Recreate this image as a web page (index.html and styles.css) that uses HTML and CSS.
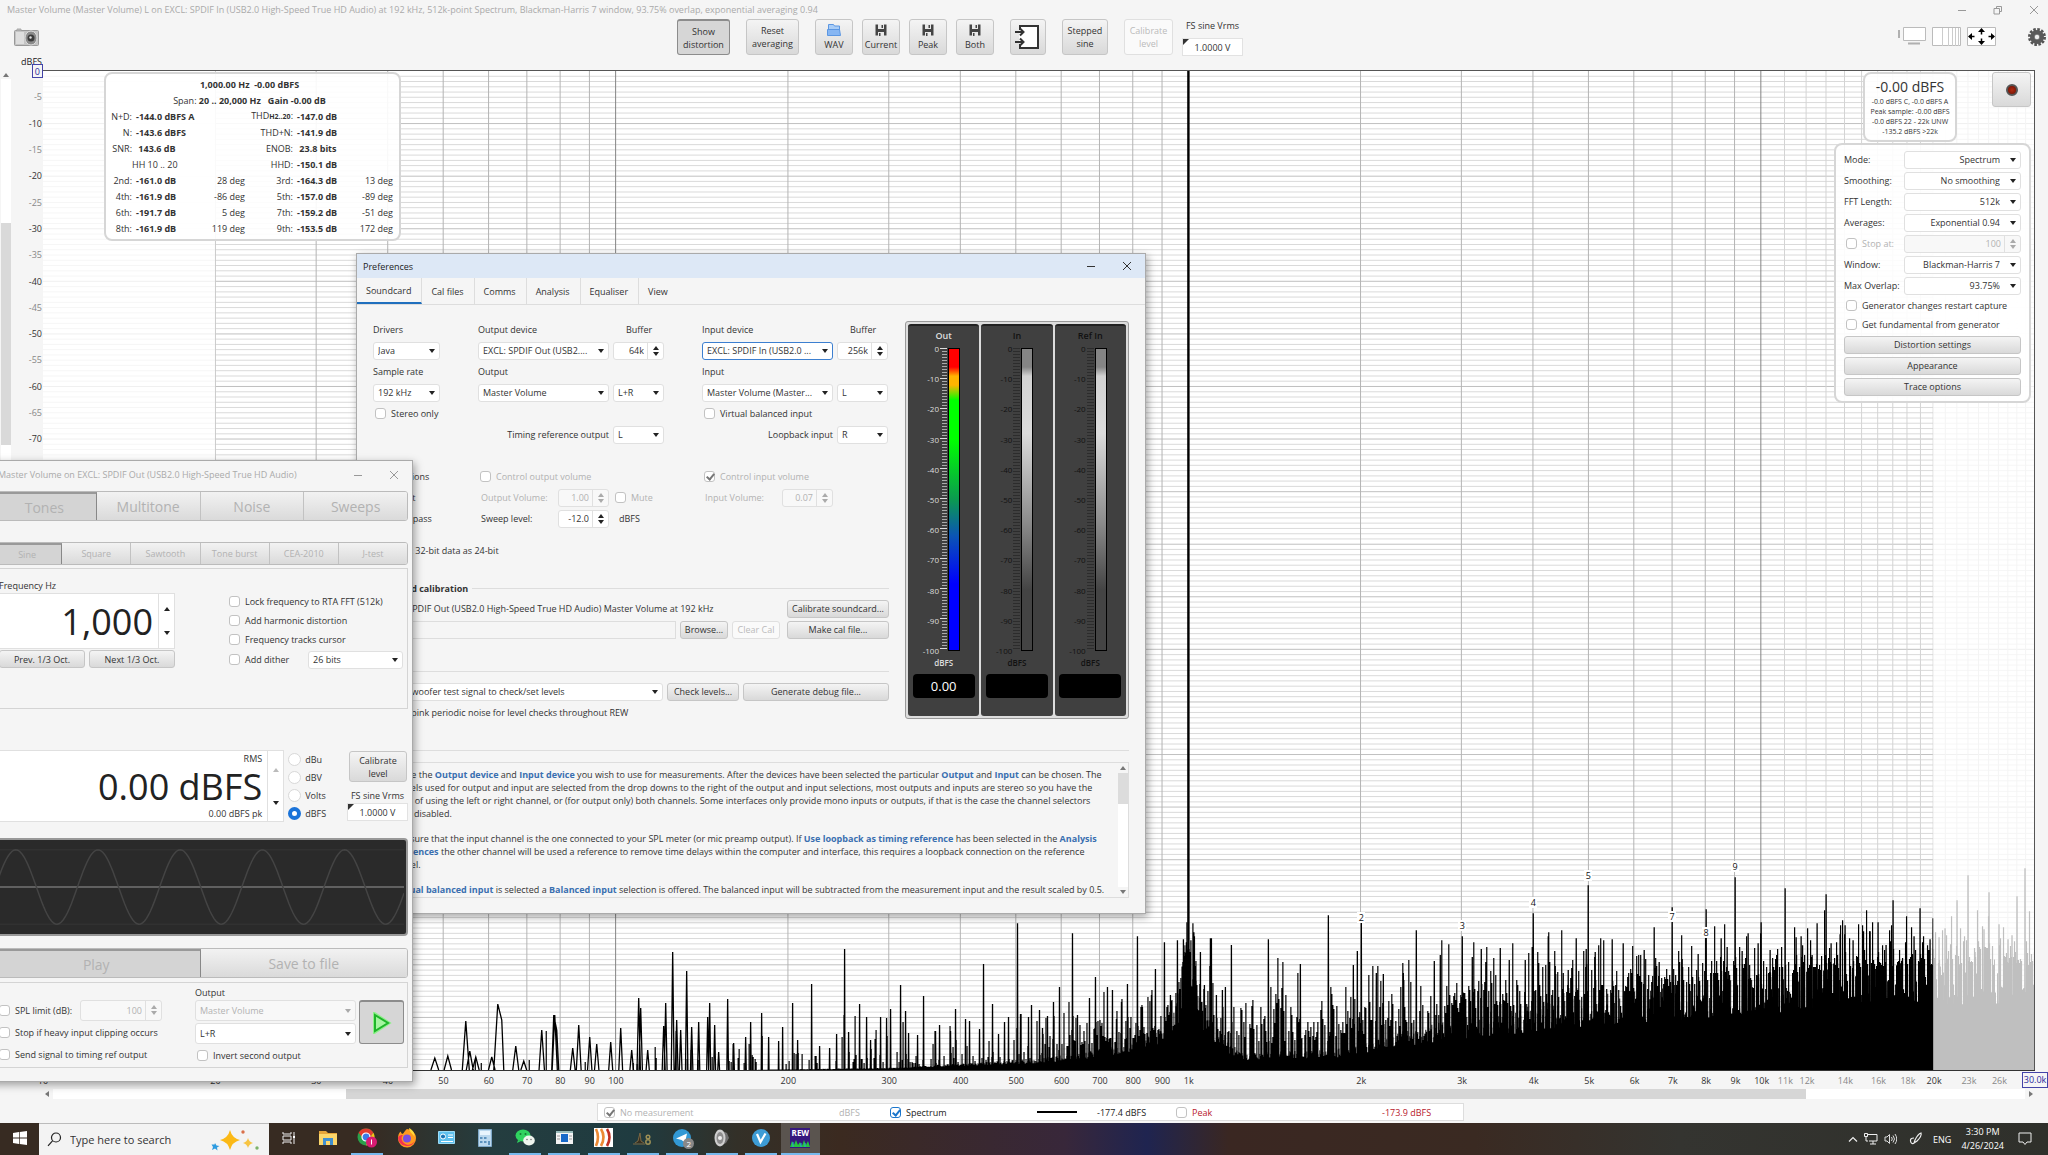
FILE: index.html
```html
<!DOCTYPE html>
<html lang="en">
<head>
<meta charset="utf-8">
<title>RTA</title>
<link rel="stylesheet" href="styles.css">
</head>
<body>
<div class="desktop">
<main class="rta">
  <header class="titlebar rta-title">
    <span class="title-text">Master Volume (Master Volume) L on EXCL: SPDIF In (USB2.0 High-Speed True HD Audio) at 192 kHz, 512k-point Spectrum, Blackman-Harris 7 window, 93.75% overlap, exponential averaging 0.94</span>
    <svg class="win-icon" viewBox="0 0 10 10"><path d="M1 5.5h8"/></svg>
    <svg class="win-icon" viewBox="0 0 10 10"><path d="M1 3.500h5.500v5.500h-5.500zM3.500 3.500v-2h5v5h-2"/></svg>
    <svg class="win-icon" viewBox="0 0 10 10"><path d="M1 1l8 8M9 1l-8 8"/></svg>
  </header>

  <div class="toolbar">
    <div class="tool-side">
      <button class="bare" aria-label="Capture image">
        <svg width="26" height="18" viewBox="0 0 26 18"><rect x=".5" y="2.500" width="24" height="15" rx="1" fill="#c4c4c4" stroke="#999"/><rect x="2" y="4" width="8" height="12" fill="#dedede"/><path d="M3 2.500v-1.500h4v1.500" fill="#bbb" stroke="#aaa"/><ellipse cx="17" cy="10" rx="6" ry="7" fill="#8b8b8b" stroke="#ddd"/><circle cx="17" cy="10" r="3.500" fill="#3c3c3c"/><circle cx="16.500" cy="9.500" r="1.200" fill="#ddd"/></svg>
      </button>
    </div>
    <div class="tool-main">
      <button class="btn tool wide pressed">Show<br>distortion</button>
      <button class="btn tool wide">Reset<br>averaging</button>
      <div class="tool-group">
        <button class="btn tool sq"><svg width="14" height="12" viewBox="0 0 14 12"><path d="M1.500 .5h5l1 1.500h5v4h-11z" fill="#a9cdf7" stroke="#5c97e2"/><path d="M.5 5.500h12l1 6h-13z" fill="#86b6f3" stroke="#5c97e2"/></svg>WAV</button>
        <button class="btn tool sq"><svg width="12" height="12" viewBox="0 0 12 12"><path d="M.5 .5h11v11h-11z" fill="#444"/><path d="M3 0h6v5h-6zM3 8h6v4h-6z" fill="#e9e9e9"/><path d="M6.500 1h1.500v3h-1.500zM4 9h1.500v3h-1.500z" fill="#444"/></svg>Current</button>
        <button class="btn tool sq"><svg width="12" height="12" viewBox="0 0 12 12"><path d="M.5 .5h11v11h-11z" fill="#444"/><path d="M3 0h6v5h-6zM3 8h6v4h-6z" fill="#e9e9e9"/><path d="M6.500 1h1.500v3h-1.500zM4 9h1.500v3h-1.500z" fill="#444"/></svg>Peak</button>
        <button class="btn tool sq"><svg width="12" height="12" viewBox="0 0 12 12"><path d="M.5 .5h11v11h-11z" fill="#444"/><path d="M3 0h6v5h-6zM3 8h6v4h-6z" fill="#e9e9e9"/><path d="M6.500 1h1.500v3h-1.500zM4 9h1.500v3h-1.500z" fill="#444"/></svg>Both</button>
      </div>
      <button class="btn tool io" aria-label="Inputs"><svg width="26" height="26" viewBox="0 0 26 26"><path d="M5 6v-4h18v22h-18v-4" fill="#fff" stroke="#333" stroke-width="2"/><path d="M5 7v12" stroke="#fff" stroke-width="2"/><path d="M0 8h8M5 4.500l3.500 3.500-3.500 3.500M0 18h8M5 14.500l3.500 3.500-3.500 3.500" fill="none" stroke="#333" stroke-width="2"/></svg></button>
      <button class="btn tool mid">Stepped<br>sine</button>
      <div class="tool-group">
        <button class="btn tool cal" disabled>Calibrate<br>level</button>
        <label class="fs">FS sine Vrms<span class="flag"><input value="1.0000 V"></span></label>
      </div>
    </div>
    <div class="tool-right">
      <button class="bare" aria-label="Scrollbars"><svg width="28" height="20" viewBox="0 0 28 20"><path d="M5.500 .5h22v13h-22z" fill="#fff" stroke="#bbb"/><path d="M1 3v8M10 16.500h12" stroke="#b0b0b0" stroke-width="2"/></svg></button>
      <button class="bare" aria-label="Frequency axis"><svg width="29" height="20" viewBox="0 0 29 20"><path d="M.5 .5h28v18h-28z" fill="#fff" stroke="#bbb"/><path d="M10.500 1v18M16.500 1v18M20.500 1v18M23.500 1v18M26.500 1v18" stroke="#ccc"/></svg></button>
      <button class="bare" aria-label="Graph limits"><svg width="29" height="20" viewBox="0 0 29 20"><path d="M.5 .5h28v18h-28z" fill="#fff" stroke="#bbb"/><path d="M2.500 9.500h5M21.500 9.500h5M14.500 2.500v5M14.500 11.500v5" stroke="#000" stroke-width="1.500"/><path d="M1 9.500l4-3.500v7zM28 9.500l-4-3.500v7zM14.500 1l-3.500 4h7zM14.500 18l-3.500-4h7z"/></svg></button>
      <button class="bare gear" aria-label="Settings"><svg width="18" height="18" viewBox="0 0 18 18"><circle cx="9" cy="9" r="7.500" fill="none" stroke="#555" stroke-width="3" stroke-dasharray="2.500 1.430"/><circle cx="9" cy="9" r="5" fill="#777" stroke="#5a5a5a" stroke-width="4"/><circle cx="9" cy="9" r="2.200" fill="#eee"/></svg></button>
    </div>
  </div>

  <div class="chart-row">
    <div class="vbar"><i class="up"></i><div class="vtrack"><div class="vthumb"></div></div></div>
    <div class="yaxis"><span class="yunit">dBFS</span><div id="ylabels"></div></div>
    <div class="plot">
      <svg id="graph" viewBox="0 0 1992 1000" preserveAspectRatio="none"></svg>
      <div id="marks"></div>
      <section class="card stats">
        <table>
          <colgroup><col class="c1"><col class="c2"><col class="c3"><col class="c4"><col class="c5"><col class="c6"></colgroup>
          <tr><td colspan="6" class="mid"><b>1,000.00 Hz&nbsp; -0.00 dBFS</b></td></tr>
          <tr><td colspan="6" class="mid">Span: <b>20 .. 20,000 Hz&nbsp;&nbsp; Gain -0.00 dB</b></td></tr>
          <tr><th>N+D:</th><td class="v">-144.0 dBFS A</td><td></td><th>THD<small>H2..20</small>:</th><td class="v">-147.0 dB</td><td></td></tr>
          <tr><th>N:</th><td class="v">-143.6 dBFS</td><td></td><th>THD+N:</th><td class="v">-141.9 dB</td><td></td></tr>
          <tr><th>SNR:</th><td class="v">&nbsp;143.6 dB</td><td></td><th>ENOB:</th><td class="v">&nbsp;23.8 bits</td><td></td></tr>
          <tr><th></th><td>HH 10 .. 20</td><td></td><th>HHD:</th><td class="v">-150.1 dB</td><td></td></tr>
          <tr><th>2nd:</th><td class="v">-161.0 dB</td><td class="d">28 deg</td><th>3rd:</th><td class="v">-164.3 dB</td><td class="d">13 deg</td></tr>
          <tr><th>4th:</th><td class="v">-161.9 dB</td><td class="d">-86 deg</td><th>5th:</th><td class="v">-157.0 dB</td><td class="d">-89 deg</td></tr>
          <tr><th>6th:</th><td class="v">-191.7 dB</td><td class="d">5 deg</td><th>7th:</th><td class="v">-159.2 dB</td><td class="d">-51 deg</td></tr>
          <tr><th>8th:</th><td class="v">-161.9 dB</td><td class="d">119 deg</td><th>9th:</th><td class="v">-153.5 dB</td><td class="d">172 deg</td></tr>
        </table>
      </section>
      <aside class="side">
        <div class="side-top">
          <div class="card level"><strong>-0.00 dBFS</strong><span>-0.0 dBFS C, -0.0 dBFS A</span><span>Peak sample: -0.00 dBFS</span><span>-0.0 dBFS 22 - 22k UNW</span><span>-135.2 dBFS &gt;22k</span></div>
          <button class="btn rec" aria-label="Record"><span class="led"></span></button>
        </div>
        <form class="card settings">
          <div class="row"><label for="s1">Mode:</label><span class="combo r"><select id="s1"><option>Spectrum</option></select></span></div>
          <div class="row"><label for="s2">Smoothing:</label><span class="combo r"><select id="s2"><option>No smoothing</option></select></span></div>
          <div class="row"><label for="s3">FFT Length:</label><span class="combo r"><select id="s3"><option>512k</option></select></span></div>
          <div class="row"><label for="s4">Averages:</label><span class="combo r"><select id="s4"><option>Exponential 0.94</option></select></span></div>
          <div class="row off"><label class="ck"><input type="checkbox" disabled>Stop at:</label><span class="spin"><input value="100" aria-label="Stop at" disabled><i class="arr"></i></span></div>
          <div class="row"><label for="s5">Window:</label><span class="combo r"><select id="s5"><option>Blackman-Harris 7</option></select></span></div>
          <div class="row"><label for="s6">Max Overlap:</label><span class="combo r"><select id="s6"><option>93.75%</option></select></span></div>
          <label class="ck short"><input type="checkbox">Generator changes restart capture</label>
          <label class="ck short"><input type="checkbox">Get fundamental from generator</label>
          <div class="row"><button type="button" class="btn full">Distortion settings</button></div>
          <div class="row"><button type="button" class="btn full">Appearance</button></div>
          <div class="row"><button type="button" class="btn full">Trace options</button></div>
        </form>
      </aside>
    </div>
  </div>
  <div class="xaxis" id="xlabels"></div>
  <div class="hbar"><i class="left"></i><div class="htrack"><div class="hthumb"></div></div><i class="right"></i></div>
  <div class="legend">
    <label class="ck off l1"><input type="checkbox" checked disabled>No measurement</label><span class="off l2">dBFS</span>
    <label class="ck blue l3"><input type="checkbox" checked>Spectrum</label><i class="trace"></i><span class="l4">-177.4 dBFS</span>
    <label class="ck red l5"><input type="checkbox">Peak</label><span class="red">-173.9 dBFS</span>
  </div>
</main>

<section class="window prefs">
  <header class="titlebar">
    <span class="title-text">Preferences</span>
    <svg class="win-icon" viewBox="0 0 10 10"><path d="M1 5.500h8"/></svg>
    <svg class="win-icon" viewBox="0 0 10 10"><path d="M1 1l8 8M9 1l-8 8"/></svg>
  </header>
  <nav class="tabs"><button class="on">Soundcard</button><button>Cal files</button><button>Comms</button><button>Analysis</button><button>Equaliser</button><button>View</button></nav>
  <div class="prefs-body">
    <div class="prefs-cols">
      <form class="card-form">
        <div class="pgrid">
          <label for="p1">Drivers</label><label for="p2" class="g2">Output device</label><label for="p3" class="g3 buf">Buffer</label><label for="p4" class="g5">Input device</label><label for="p5" class="g6 buf">Buffer</label>
          <span class="combo drv"><select id="p1"><option>Java</option></select></span><span class="combo g2"><select id="p2"><option>EXCL: SPDIF Out (USB2....</option></select></span><span class="spin g3"><input id="p3" value="64k"><i class="arr"></i></span><span class="combo focus g5"><select id="p4"><option>EXCL: SPDIF In (USB2.0 ...</option></select></span><span class="spin g6"><input id="p5" value="256k"><i class="arr"></i></span>
          <label for="p6">Sample rate</label><label for="p7" class="g2">Output</label><label for="p8" class="g5">Input</label>
          <span class="combo drv"><select id="p6"><option>192 kHz</option></select></span><span class="combo g2"><select id="p7"><option>Master Volume</option></select></span><span class="combo g3"><select aria-label="Output channel"><option>L+R</option></select></span><span class="combo g5"><select id="p8"><option>Master Volume (Master...</option></select></span><span class="combo g6"><select aria-label="Input channel"><option>L</option></select></span>
          <label class="ck g1"><input type="checkbox">Stereo only</label><label class="ck g5"><input type="checkbox">Virtual balanced input</label>
          <label for="p9" class="g2 end">Timing reference output</label><span class="combo g3"><select id="p9"><option>L</option></select></span><label for="p10" class="g5 end">Loopback input</label><span class="combo g6"><select id="p10"><option>R</option></select></span>
          <span class="blank g1"></span>
          <span class="g1">Input options</span><label class="ck off g2"><input type="checkbox" disabled>Control output volume</label><label class="ck off g5"><input type="checkbox" checked disabled>Control input volume</label>
          <label class="ck g1"><input type="checkbox">Invert</label><span class="pair off g2"><label for="p11">Output Volume:</label><span class="spin"><input id="p11" value="1.00" disabled><i class="arr"></i></span></span><label class="ck off g3"><input type="checkbox" disabled>Mute</label><span class="pair off g5"><label for="p12">Input Volume:</label><span class="spin"><input id="p12" value="0.07" disabled><i class="arr"></i></span></span>
          <label class="ck g1"><input type="checkbox">High pass</label><span class="pair g2"><label for="p13">Sweep level:</label><span class="spin"><input id="p13" value="-12.0"><i class="arr"></i></span></span><span class="unit g3">dBFS</span>
        </div>
        <label class="ck treat"><input type="checkbox">Treat 32-bit data as 24-bit</label>
        <h2><span>Soundcard calibration</span></h2>
        <div class="prow"><span class="grow dev">EXCL: SPDIF Out (USB2.0 High-Speed True HD Audio) Master Volume at 192 kHz</span><button type="button" class="btn b102">Calibrate soundcard...</button></div>
        <div class="prow"><input class="path grow" aria-label="Calibration file"><button type="button" class="btn b48">Browse...</button><button type="button" class="btn b48" disabled>Clear Cal</button><button type="button" class="btn b102 more">Make cal file...</button></div>
        <hr>
        <div class="prow"><span class="combo grow"><select aria-label="Test signal"><option>Use subwoofer test signal to check/set levels</option></select></span><button type="button" class="btn b72">Check levels...</button><button type="button" class="btn b146">Generate debug file...</button></div>
        <label class="ck pink"><input type="checkbox">Use pink periodic noise for level checks throughout REW</label>
      </form>
      <div class="meters" id="meters"></div>
    </div>
    <div class="help">
      <div class="help-text">
        <p>Choose the <b>Output device</b> and <b>Input device</b> you wish to use for measurements. After the devices have been selected the particular <b>Output</b> and <b>Input</b> can be chosen. The<br>channels used for output and input are selected from the drop downs to the right of the output and input selections, most outputs and inputs are stereo so you have the<br>option of using the left or right channel, or (for output only) both channels. Some interfaces only provide mono inputs or outputs, if that is the case the channel selectors<br>will be disabled.</p>
        <p>Make sure that the input channel is the one connected to your SPL meter (or mic preamp output). If <b>Use loopback as timing reference</b> has been selected in the <b>Analysis</b><br><b>Preferences</b> the other channel will be used a reference to remove time delays within the computer and interface, this requires a loopback connection on the reference<br>channel.</p>
        <p>If <b>Virtual balanced input</b> is selected a <b>Balanced input</b> selection is offered. The balanced input will be subtracted from the measurement input and the result scaled by 0.5.</p>
      </div>
      <div class="help-bar"><i class="up"></i><div class="hb-track"><div class="hb-thumb"></div></div><i class="down"></i></div>
    </div>
  </div>
</section>

<section class="window gen">
  <header class="titlebar">
    <span class="title-text">Master Volume on EXCL: SPDIF Out (USB2.0 High-Speed True HD Audio)</span>
    <svg class="win-icon" viewBox="0 0 10 10"><path d="M1 5.500h8"/></svg>
    <svg class="win-icon" viewBox="0 0 10 10"><path d="M1 1l8 8M9 1l-8 8"/></svg>
  </header>
  <div class="gen-body">
    <div class="seg big four"><button class="on">Tones</button><button>Multitone</button><button>Noise</button><button>Sweeps</button></div>
    <div class="seg small"><button class="on">Sine</button><button>Square</button><button>Sawtooth</button><button>Tone burst</button><button>CEA-2010</button><button>J-test</button></div>
    <div class="panel tone">
      <div class="freq">
        <label for="g1">Frequency Hz</label>
        <span class="bigspin"><input id="g1" value="1,000"><i class="updn"></i></span>
        <div class="oct"><button class="btn">Prev. 1/3 Oct.</button><button class="btn">Next 1/3 Oct.</button></div>
      </div>
      <div class="opts">
        <label class="ck"><input type="checkbox">Lock frequency to RTA FFT (512k)</label>
        <label class="ck"><input type="checkbox">Add harmonic distortion</label>
        <label class="ck"><input type="checkbox">Frequency tracks cursor</label>
        <div class="dither"><label class="ck"><input type="checkbox">Add dither</label><span class="combo"><select aria-label="Dither bits"><option>26 bits</option></select></span></div>
      </div>
    </div>
    <div class="levels">
      <div class="bigspin lvl"><div class="lvl-text"><label for="g2">RMS</label><input id="g2" value="0.00 dBFS"><span>0.00 dBFS pk</span></div><i class="updn half"></i></div>
      <div class="radios">
        <label><input type="radio" name="u">dBu</label><label><input type="radio" name="u">dBV</label><label><input type="radio" name="u">Volts</label><label><input type="radio" name="u" checked>dBFS</label>
      </div>
      <div class="calib"><button class="btn">Calibrate<br>level</button><label class="fs">FS sine Vrms<span class="flag"><input value="1.0000 V"></span></label></div>
    </div>
    <div class="scope"><svg id="wave" viewBox="0 0 412 92" preserveAspectRatio="none"></svg></div>
    <div class="seg big two"><button class="on">Play</button><button>Save to file</button></div>
    <div class="panel outp">
      <div class="out-left">
        <div class="spl"><label class="ck"><input type="checkbox">SPL limit (dB):</label><span class="spin off"><input value="100" aria-label="SPL limit" disabled><i class="arr"></i></span></div>
        <label class="ck"><input type="checkbox">Stop if heavy input clipping occurs</label>
        <label class="ck"><input type="checkbox">Send signal to timing ref output</label>
      </div>
      <div class="out-mid">
        <label for="g3">Output</label>
        <span class="combo off"><select id="g3" disabled><option>Master Volume</option></select></span>
        <span class="combo"><select aria-label="Output channels"><option>L+R</option></select></span>
        <label class="ck"><input type="checkbox">Invert second output</label>
      </div>
      <button class="btn play pressed" aria-label="Play"><svg width="20" height="22" viewBox="0 0 20 22"><path d="M3 2.500l13 8.500-13 8.500z" fill="#b9ffb0" stroke="#8df08a" stroke-width="4"/><path d="M3 3l13 8-13 8z" fill="#a5f5a0" stroke="#1fb52a" stroke-width="2"/></svg></button>
    </div>
  </div>
</section>

<footer class="taskbar">
  <button class="tb start" aria-label="Start"><svg width="14" height="14" viewBox="0 0 14 14"><path d="M0 2l6-1v5.600h-6zM6.700 .9l7.300-.9v6.600h-7.300zM0 7.400h6v5.600l-6-1zM6.700 7.400h7.300v6.600l-7.300-.9z" fill="#fff"/></svg></button>
  <label class="search"><svg width="15" height="15" viewBox="0 0 15 15"><circle cx="9" cy="5.500" r="4.500" fill="none" stroke="#222" stroke-width="1.200"/><path d="M5.500 8.800l-4.500 5" stroke="#222" stroke-width="1.200"/></svg><input placeholder="Type here to search">
    <svg width="50" height="22" viewBox="0 0 50 22"><path d="M19 1q2 8 10 10q-8 2-10 10q-2-8-10-10q8-2 10-10z" fill="#fbb916"/><path d="M37 9q1 4 5 5q-4 1-5 5q-1-4-5-5q4-1 5-5z" fill="#f7c443"/><path d="M4 14l1.500 2.500 3 .5-2.500 1.500.5 3-2.500-2-3 1.500 1-3-1.500-2.500h3z" fill="#2d9be0"/><circle cx="32" cy="3" r="1.700" fill="#d9704a"/><circle cx="46" cy="19" r="1.700" fill="#7cb36a"/></svg></label>
  <nav class="apps">
    <button class="tb" aria-label="Task view"><svg width="14" height="14" viewBox="0 0 14 14"><path d="M1 1v2h8v-2M1 13v-2h8v2M1 5h8v4h-8zM12 1v12" fill="none" stroke="#eee"/><path d="M11 5h2v2h-2z" fill="#fff"/></svg></button>
    <button class="tb" aria-label="Explorer"><svg width="18" height="16" viewBox="0 0 18 16"><path d="M0 1h7l2 2h9v12h-18z" fill="#e5a53a"/><path d="M0 4h18v11h-18z" fill="#fbd66b"/><path d="M4 8h10v7h-3v-4h-4v4h-3z" fill="#3f8fd0"/></svg></button>
    <button class="tb run" aria-label="Chrome"><svg width="20" height="20" viewBox="0 0 20 20"><circle cx="9" cy="9" r="8.500" fill="#2aa04a"/><path d="M1.600 4.800a8.500 8.500 0 0 1 14.800 0l-3.400 4.200-8 0z" fill="#e33b2e"/><path d="M16.400 4.800a8.500 8.500 0 0 1-7.400 12.700l4-8z" fill="#fbc116"/><circle cx="9" cy="9" r="4" fill="#3a7be8" stroke="#fff" stroke-width="1.200"/><circle cx="14.500" cy="14" r="5.500" fill="#d81b73"/><path d="M14.500 11.500v5" stroke="#fff"/></svg></button>
    <button class="tb" aria-label="Firefox"><svg width="20" height="20" viewBox="0 0 20 20"><path d="M10 1c6 1 9 5 9 9a9 9 0 0 1-18 1c0-4 1-6 2.500-7.500l1.500 2.500c2 0 2-3 5-5z" fill="#ff9a1f"/><path d="M1 10a9 9 0 0 0 17 3c-3 4-8 5-11 2s-3-6-1-8c-2 0-4 0-5 3z" fill="#f5324e"/><circle cx="10" cy="10.500" r="4" fill="#7b4ee0"/><path d="M12 0c4 2 6 5 5.500 9-1-3-5-4-5.500-9z" fill="#ffd93a"/></svg></button>
    <button class="tb" aria-label="Control panel"><svg width="17" height="13" viewBox="0 0 17 13"><path d="M.5 .5h16v12h-16z" fill="#5fc0ee" stroke="#9cdcf7"/><circle cx="5" cy="5.500" r="2.500" fill="#1873b5" stroke="#fff"/><path d="M10 4h5M10 6.500h5M3 10.500h12" stroke="#fff"/></svg></button>
    <button class="tb" aria-label="Calculator"><svg width="14" height="18" viewBox="0 0 14 18"><path d="M.5 .5h13v17h-13z" fill="#bcd9ee" stroke="#7fa9c9"/><path d="M2 2h10v4h-10z" fill="#e9f5fd"/><path d="M2 8h2.500v2h-2.500zM6 8h2.500v2h-2.500zM2 12h2.500v2h-2.500zM6 12h2.500v2h-2.500zM10 12h2v4h-2z" fill="#5d93bd"/></svg></button>
    <button class="tb run" aria-label="WeChat"><svg width="20" height="18" viewBox="0 0 20 18"><ellipse cx="8" cy="6.500" rx="7.500" ry="6" fill="#2fd35f"/><path d="M3 11l-1 3 4-2z" fill="#2fd35f"/><ellipse cx="14" cy="11.500" rx="5.800" ry="5" fill="#eef5ee"/><g fill="#157a34"><circle cx="5.500" cy="5" r="1"/><circle cx="10.500" cy="5" r="1"/></g><g fill="#777"><circle cx="12" cy="10.500" r=".8"/><circle cx="16" cy="10.500" r=".8"/></g></svg></button>
    <button class="tb run" aria-label="Viewer"><svg width="17" height="13" viewBox="0 0 17 13"><path d="M0 0h17v13h-17z" fill="#f4f4f4"/><path d="M5 3h7v8h-7z" fill="#1769c8"/><path d="M0 1h17" stroke="#9bb" stroke-width="2"/><path d="M1 5h3M1 8h3M13 5h3M13 8h3" stroke="#999"/></svg></button>
    <button class="tb run" aria-label="Audio tool"><svg width="19" height="19" viewBox="0 0 19 19"><path d="M0 0h19v19h-19z" fill="#fff"/><path d="M2 1q4 8 0 17M7 1q5 8 0 17" fill="none" stroke="#ec8a34" stroke-width="2.600"/><path d="M13 1q5 8 0 17" fill="none" stroke="#c23022" stroke-width="2.600"/></svg></button>
    <button class="tb run" aria-label="Amp tool"><svg width="19" height="16" viewBox="0 0 19 16"><path d="M0 14h12M2 13l3-2 2-8 1 8 3 2" fill="#3a3020" stroke="#7d6843"/><circle cx="15" cy="7" r="1.800" fill="none" stroke="#9c8f56" stroke-width="1.500"/><circle cx="15" cy="12" r="2.200" fill="none" stroke="#9c8f56" stroke-width="1.500"/></svg></button>
    <button class="tb run" aria-label="Messenger"><span class="badge-wrap"><svg width="18" height="18" viewBox="0 0 18 18"><circle cx="9" cy="9" r="9" fill="#3299d5"/><path d="M3 9.500l11-5-2 9-3.500-2.500z" fill="#fff"/></svg><b class="badge">2</b></span></button>
    <button class="tb run" aria-label="Speaker"><svg width="16" height="18" viewBox="0 0 16 18"><path d="M6 1l7 3 2 5-3 5-6 3z" fill="#6f6f6f"/><ellipse cx="6" cy="9" rx="5.500" ry="8.500" fill="#cfcfcf"/><ellipse cx="6" cy="9" rx="3.500" ry="6" fill="#8d8d8d"/><circle cx="6" cy="9" r="2" fill="#eee"/></svg></button>
    <button class="tb run" aria-label="V app"><svg width="18" height="18" viewBox="0 0 18 18"><circle cx="9" cy="9" r="9" fill="#3d9cd6"/><path d="M5 5l3.500 8 5-8.500" fill="none" stroke="#fff" stroke-width="2.200"/></svg></button>
    <button class="tb run active" aria-label="REW"><span class="rew"><b>REW</b><svg width="20" height="9" viewBox="0 0 20 9"><path d="M0 9l2-6 2 4 2-5 2 5 2-3 2 4 2-6 2 5 2-4 2 6z" fill="#26c53c"/><path d="M3 9v-5M11 9v-4M15 9v-4" stroke="#27a8d8"/></svg></span></button>
  </nav>
  <div class="tray">
    <svg width="10" height="8" viewBox="0 0 10 8"><path d="M1 6.500l4-4 4 4" fill="none" stroke="#eee" stroke-width="1.200"/></svg>
    <svg width="14" height="12" viewBox="0 0 14 12"><path d="M4 1.500h9v6.500h-8M9 8v3M6 11h6M.5 .5h3v3h-3zM2 4v4h2" fill="none" stroke="#eee"/></svg>
    <svg width="13" height="12" viewBox="0 0 13 12"><path d="M1 4h2l2.500-2.500v9l-2.500-2.500h-2zM7.500 4q1.500 2 0 4M9 2.500q3 3.500 0 7M11 1q3.500 5 0 10" fill="none" stroke="#ddd"/></svg>
    <svg class="pen" width="14" height="14" viewBox="0 0 14 14"><path d="M12 1q-3 1-6 7l-1 3 3-2q5-5 4-8zM5 6q-4 0-3.500 3t3 2.500" fill="none" stroke="#eee" stroke-width="1.200"/></svg>
    <span>ENG</span>
    <time>3:30 PM<br>4/26/2024</time>
    <svg width="14" height="14" viewBox="0 0 14 14"><path d="M1 1h12v9h-4l-2 2.500-2-2.500h-4z" fill="none" stroke="#eee"/></svg>
  </div>
</footer>
</div>
<script src="app.js"></script>
</body>
</html>
```
FILE: styles.css
```css
* { box-sizing: border-box; }
body, button, input, select { font-family: "Open Sans", "Noto Sans", sans-serif; font-size: 9px; color: #333; }
body { margin: 0; line-height: 13px; background: #f5f5f5; }
button, input, select { margin: 0; }
p, h2 { margin: 0; }
svg { display: block; flex: none; }

.desktop { position: relative; height: 100vh; overflow: hidden; display: flex; flex-direction: column; }
.rta { flex: 1; min-height: 0; display: flex; flex-direction: column; background: #f5f5f5; }

.titlebar { display: flex; align-items: center; gap: 26px; height: 24px; padding: 0 13px 0 7px; flex: none; }
.title-text { flex: 1; white-space: nowrap; }
.win-icon { width: 10px; height: 10px; fill: none; stroke: #333; stroke-width: 1; }
.rta-title { height: 19px; padding: 0 9px 0 7px; color: #aaa; }
.rta-title .win-icon { stroke: #999; }

/* buttons */
.btn { height: 18px; padding: 0; border: 1px solid #c6c6c6; border-radius: 3px; background: linear-gradient(#f4f4f4, #d9d9d9); line-height: 13px; white-space: nowrap; }
.btn.pressed { background: #d6d6d6; border: 1px solid #8c8c8c; border-top-width: 2px; }
.btn:disabled { background: #fafafa; border-color: #e0e0e0; color: #bbb; }
.bare { padding: 0; border: 0; background: none; }

/* toolbar */
.toolbar { display: flex; align-items: flex-start; height: 51px; flex: none; }
.tool-side { width: 677px; padding: 9px 0 0 14px; }
.tool-main { display: flex; gap: 16px; }
.tool-group { display: flex; gap: 9px; }
.btn.tool { height: 36px; display: flex; flex-direction: column; align-items: center; justify-content: center; }
.tool.wide { width: 53px; }
.tool.sq { width: 38px; gap: 2px; }
.tool.io { width: 36px; }
.tool.mid { width: 46px; }
.tool.cal { width: 49px; }
.tool-right { display: flex; gap: 6px; margin-left: auto; padding: 8px 2px 0 0; }
.gear { margin-left: 26px; }
.fs { display: block; width: 61px; text-align: center; }
.flag { display: block; margin-top: 6px; position: relative; }
.flag input { width: 100%; height: 18px; border: 1px solid #e2e2e2; background: #fff; text-align: center; padding: 0; display: block; }
.flag::before { content: ""; position: absolute; left: 1px; top: 1px; border: 3px solid transparent; border-top-color: #333; border-left-color: #333; }

/* check boxes, combos and spinners */
.ck { display: flex; align-items: center; gap: 5px; white-space: nowrap; padding-left: 2px; }
.ck input { appearance: none; flex: none; width: 11px; height: 11px; border: 1px solid #c2c2c2; border-radius: 3px; background: #fff; position: relative; }
.ck input:checked::after { content: ""; position: absolute; left: 3px; top: 0; width: 3px; height: 6px; border: solid #777; border-width: 0 2px 2px 0; transform: rotate(40deg); }
.ck.blue { color: #222; }
.ck.blue input { border-color: #1b76cc; }
.ck.blue input:checked::after { border-color: #1b76cc; }
.off, .off input, .off select { color: #b2b2b2; }
.combo { display: block; position: relative; min-width: 0; }
.combo select { appearance: none; display: block; width: 100%; height: 18px; padding: 0 20px 0 4px; border: 1px solid #e0e0e0; border-radius: 3px; background: #fff; opacity: 1; }
.combo.r select { text-align-last: right; }
.combo.focus select { border: 1px solid #3c7fd0; }
.combo::after { content: ""; position: absolute; right: 5px; top: 50%; margin-top: -2px; border: 3px solid transparent; border-top: 4px solid #222; border-bottom: 0; pointer-events: none; }
.combo.off::after { border-top-color: #aaa; }
.combo.off select { background: #f8f8f8; }
.spin { display: flex; height: 18px; border: 1px solid #e0e0e0; border-radius: 3px; background: #fff; min-width: 0; }
.spin input { flex: 1; min-width: 0; border: 0; padding: 0 3px 0 0; background: none; text-align: right; }
.arr { width: 16px; border-left: 1px solid #e0e0e0; display: flex; flex-direction: column; align-items: center; justify-content: center; gap: 2px; color: #222; }
.arr::before, .arr::after { content: ""; border: 3px solid transparent; }
.arr::before { border-bottom: 4px solid; border-top: 0; }
.arr::after { border-top: 4px solid; border-bottom: 0; }
.off .arr, .off.spin .arr { color: #aaa; }
.off .spin, .off.spin { background: #f8f8f8; }

/* scroll arrows */
.up, .down, .left, .right { width: 0; height: 0; border: 3px solid transparent; flex: none; }
.up { border-bottom: 4px solid #777; border-top: 0; }
.down { border-top: 4px solid #777; border-bottom: 0; }
.left { border-right: 4px solid #777; border-left: 0; }
.right { border-left: 4px solid #777; border-right: 0; }

/* chart */
.chart-row { flex: 1; min-height: 0; display: flex; padding-right: 13px; }
.vbar { width: 12px; display: flex; flex-direction: column; align-items: center; padding-top: 3px; }
.vtrack { flex: 1; width: 10px; margin-top: 2px; background: #fff; padding-top: 144px; }
.vthumb { height: 222px; background: #d9d9d9; }
.yaxis { width: 31px; position: relative; }
.yunit { position: absolute; right: 1px; top: -15px; color: #222; }
#ylabels, #marks { position: absolute; inset: 0; }
#ylabels span { position: absolute; right: 1px; height: 14px; margin-top: -6px; color: #888; }
#ylabels .maj { color: #333; }
#ylabels .end { right: 0; padding: 0 2px; line-height: 13px; border: 1px solid #4444a8; color: #2b2b9c; background: #f5f5f5; z-index: 1; }
.plot { flex: 1; position: relative; background: #fff; border: solid #555; border-width: 1px 1px 0 0; }
.plot > svg { position: absolute; inset: 0; width: 100%; height: 100%; }
#marks span { position: absolute; width: 8px; height: 11px; line-height: 11px; margin: -5px 0 0 -4px; text-align: center; color: #111; background: #fff; }
.xaxis { position: relative; height: 19px; margin: 0 13px 0 43px; border-top: 1px solid #333; flex: none; }
.xaxis span { position: absolute; width: 32px; margin-left: -16px; top: 3px; text-align: center; color: #888; }
.xaxis .maj { color: #333; }
.xaxis .end { width: 26px; margin-left: -13px; top: 1px; line-height: 14px; border: 1px solid #4444a8; color: #2b2b9c; background: #f5f5f5; }
.hbar { display: flex; align-items: center; gap: 4px; height: 10px; padding: 0 15px 0 45px; flex: none; }
.htrack { flex: 1; height: 10px; background: #fff; padding: 0 11% 0 293px; }
.hthumb { height: 100%; background: #d6d6d6; }
.legend { display: flex; align-items: center; width: 867px; height: 18px; margin: 4px 0 2px 597px; padding-left: 4px; border: 1px solid #ddd; background: #fff; flex: none; }
.legend .l1 { width: 237px; }
.legend .l2 { width: 49px; }
.legend .l3 { width: 149px; }
.trace { width: 40px; height: 2px; background: #000; }
.legend .l4 { width: 97px; padding-left: 20px; color: #222; }
.legend .l5 { width: 208px; }
.red { color: #b8202c; }

.card { border: 2px solid #d6d6d6; border-radius: 8px; background: rgba(255, 255, 255, .9); }
.stats { position: absolute; left: 61px; top: 1px; width: 297px; padding: 2px 6px 3px 0; }
.stats table { width: 100%; table-layout: fixed; border-collapse: collapse; }
.stats td, .stats th { height: 16px; padding: 0; line-height: 13px; font-weight: 400; white-space: nowrap; }
.stats th, .stats .d { text-align: right; }
.stats .mid { text-align: center; }
.stats .v { font-weight: 700; padding-left: 4px; }
.stats small { font-size: 7px; font-weight: 700; }
.c1 { width: 26px; } .c2 { width: 69px; } .c3 { width: 44px; } .c4 { width: 48px; } .c5 { width: 62px; } .c6 { width: 38px; }
.side { position: absolute; right: 3px; top: 1px; width: 197px; }
.side-top { display: flex; align-items: flex-start; justify-content: space-between; padding-left: 29px; }
.level { width: 94px; height: 70px; display: flex; flex-direction: column; align-items: center; font-size: 7px; line-height: 10px; padding-top: 3px; white-space: nowrap; }
.level strong { font-size: 14px; font-weight: 400; line-height: 20px; }
.rec { width: 39px; height: 35px; display: grid; place-items: center; }
.led { width: 12px; height: 12px; border-radius: 6px; border: 2px solid #555; background: radial-gradient(#b02a10, #6b1004); }
.settings { margin-top: 1px; padding: 4px 8px 4px 8px; }
.settings .row { display: grid; grid-template-columns: 60px 1fr; align-items: center; height: 21px; }
.settings .full { grid-column: 1 / -1; }
.settings .short { height: 19px; }

/* windows */
.window { position: absolute; background: #f5f5f5; border: 1px solid #aaa; box-shadow: 2px 3px 8px rgba(0, 0, 0, .35); }
.prefs { left: 356px; top: 253px; width: 790px; }
.prefs .titlebar { background: #dde8f6; color: #222; padding-left: 6px; }
.tabs { display: flex; height: 27px; border-bottom: 1px solid #ddd; }
.tabs button { padding: 0 10px 0 9px; border: 0; border-right: 1px solid #ddd; background: none; }
.tabs button:last-child { border-right: 0; }
.tabs .on { border-bottom: 2px solid #1f6fbd; }
.prefs-body { padding: 14px 16px 15px 16px; }
.prefs-cols { display: flex; justify-content: space-between; border-bottom: 1px solid #ddd; padding-bottom: 27px; }
.card-form { width: 516px; }
.pgrid { display: grid; grid-template-columns: 101px 131px 51px 30px 131px 51px; column-gap: 4px; grid-auto-rows: 21px; align-items: center; white-space: nowrap; }
.g1 { grid-column: 1; } .g2 { grid-column: 2; } .g3 { grid-column: 3; } .g5 { grid-column: 5; } .g6 { grid-column: 6; }
.drv { width: 67px; grid-column: 1; }
.buf { padding-left: 13px; }
.end { text-align: right; }
.unit { padding-left: 6px; }
.pair { display: flex; align-items: center; justify-content: space-between; padding-left: 3px; }
.pair .spin { width: 51px; }
.treat { height: 20px; margin-top: 11px; }
.prefs h2 { display: flex; align-items: center; gap: 4px; height: 20px; margin: 18px 0 0 -4px; font-size: 9px; font-weight: 700; white-space: nowrap; }
.prefs h2::after { content: ""; flex: 1; border-top: 1px solid #ddd; }
.prow { display: flex; align-items: center; gap: 4px; height: 21px; white-space: nowrap; }
.grow { flex: 1; }
.dev { padding-left: 9px; }
.path { height: 18px; border: 1px solid #ddd; background: #f5f5f5; }
.b48 { width: 48px; } .b102 { width: 102px; } .b72 { width: 72px; } .b146 { width: 146px; }
.more { margin-left: 3px; }
.prefs hr { margin: 31px 0 9px; border: 0; border-top: 1px solid #ddd; }
.pink { height: 21px; padding-left: 4px; }

.meters { display: flex; gap: 2px; width: 224px; height: 398px; margin-top: 2px; padding: 2px; border: 1px solid #999; border-radius: 3px; background: #ddd; }
.meter { flex: 1; background: #404040; border-radius: 3px; display: flex; flex-direction: column; align-items: center; padding-top: 3px; color: #111; border-top: 2px solid #222; }
.meter.live { color: #ddd; }
.meter h3 { margin: 0; font-size: 9px; line-height: 13px; font-weight: 600; }
.scale { display: flex; width: 100%; height: 303px; margin-top: 6px; }
.nums { width: 31px; height: 313px; margin-top: -5px; display: flex; flex-direction: column; justify-content: space-between; text-align: right; font-size: 8px; line-height: 11px; }
.ticks { width: 7px; margin: 0 1px 0 1px; background: repeating-linear-gradient(#2c2c2c 0 1px, transparent 1px 3px); }
.live .ticks { background: repeating-linear-gradient(#ddd 0 1px, transparent 1px 30px), repeating-linear-gradient(#aaa 0 1px, transparent 1px 3px) right / 5px 100% no-repeat; }
.bar { width: 12px; border: 1px solid #000; background: linear-gradient(#858585 0 6%, #d2d2d2 9%, #dcdcdc 28%, #8a8a8a 58%, #444 80%); }
.live .bar { background: linear-gradient(red 0 6%, #ffb400 9% 12%, lime 17% 30%, #0b9a50 50%, #0b55b4 62%, blue 78%); }
.meter .u { font-size: 8px; font-weight: 600; line-height: 12px; margin-top: 6px; }
.meter output { width: 62px; height: 24px; margin-top: 5px; border-radius: 4px; background: #000; color: #fff; font-size: 13px; line-height: 24px; text-align: center; }

.help { display: flex; height: 136px; margin: 11px 0 0 -7px; border: 1px solid #ddd; }
.help-text { flex: 1; padding: 5px 0 0 18px; white-space: nowrap; overflow: hidden; }
.help-text p { margin-bottom: 12px; line-height: 13px; }
.help-text b { color: #3a6fb0; }
.help-bar { width: 11px; display: flex; flex-direction: column; align-items: center; padding: 3px 0; gap: 3px; }
.hb-track { flex: 1; width: 10px; background: #fff; }
.hb-thumb { height: 31px; background: #dcdcdc; }

.gen { left: -13px; top: 460px; width: 426px; }
.gen .titlebar { height: 27px; color: #aaa; padding-left: 10px; }
.gen .win-icon { stroke: #999; }
.gen-body { padding: 3px 4px 13px; }
.seg { display: flex; border: 1px solid #bbb; border-radius: 3px; overflow: hidden; }
.seg button { flex: 1 1 0; min-width: 0; padding: 0; border: 0; border-right: 1px solid #c2c2c2; background: linear-gradient(#f2f2f2, #dadada); color: #b2b2b2; white-space: nowrap; }
.seg button:last-child { border-right: 0; }
.seg .on { background: #d4d4d4; border-right-color: #888; border-top: 2px solid #999; }
.big { height: 30px; }
.big button { font-size: 14px; }
.small { height: 23px; margin-top: 21px; }
.panel { border: 1px solid #d4d4d4; }
.tone { display: flex; justify-content: space-between; height: 141px; margin-top: 3px; padding: 10px 4px 0 6px; }
.freq { width: 176px; }
.freq label { display: block; }
.bigspin { display: flex; height: 56px; margin-top: 1px; border: 1px solid #e0e0e0; background: #fff; }
.bigspin input { flex: 1; min-width: 0; padding: 0 5px 0 0; border: 0; background: none; text-align: right; font-size: 36px; color: #222; }
.updn { width: 16px; border-left: 1px solid #e0e0e0; display: flex; flex-direction: column; align-items: center; justify-content: center; gap: 20px; color: #222; }
.updn::before, .updn::after { content: ""; border: 3px solid transparent; }
.updn::before { border-bottom: 4px solid; border-top: 0; }
.updn::after { border-top: 4px solid; border-bottom: 0; }
.half { gap: 29px; }
.half::before { border-bottom-color: #bbb; }
.oct { display: flex; gap: 4px; margin-top: 1px; }
.oct .btn { flex: 1; }
.opts { width: 176px; padding-top: 13px; }
.opts > .ck { height: 19px; }
.dither { display: flex; justify-content: space-between; align-items: center; height: 21px; }
.dither .combo { width: 95px; }
.levels { display: flex; height: 72px; margin-top: 41px; }
.bigspin.lvl { width: 293px; height: 72px; margin-top: 0; }
.lvl-text { flex: 1; display: flex; flex-direction: column; text-align: right; padding: 1px 5px 0 0; }
.lvl-text input { flex: none; height: 42px; width: 100%; padding: 0; }
.radios { display: flex; flex-direction: column; width: 63px; padding-left: 4px; }
.radios label { display: flex; align-items: center; gap: 4px; height: 18px; }
.radios input { appearance: none; width: 13px; height: 13px; border: 1px solid #d8d8d8; border-radius: 7px; background: #fff; }
.radios input:checked { border: 4px solid #1a73d9; }
.calib { flex: 1; display: flex; flex-direction: column; align-items: flex-end; }
.calib .btn { width: 58px; height: 31px; margin: 1px 1px 7px 0; }
.calib .flag { margin-top: 1px; }
.scope { height: 98px; margin-top: 16px; padding: 2px; border: 2px solid #999; border-radius: 4px; background: #2a2a2a; }
.scope svg { width: 100%; height: 100%; }
.two { margin-top: 12px; }
.outp { display: flex; height: 86px; margin-top: 4px; padding: 2px 3px 0 6px; }
.out-left { width: 196px; padding: 14px 33px 0 0; }
.spl { display: flex; justify-content: space-between; align-items: center; height: 22px; }
.spl .spin { width: 82px; height: 21px; }
.out-left > .ck { height: 22px; }
.out-left .ck { padding: 0; }
.out-mid { width: 161px; }
.out-mid > label:first-child { display: block; line-height: 15px; }
.out-mid .combo { margin-bottom: 2px; }
.out-mid .combo select { height: 21px; }
.out-mid .ck { height: 18px; }
.btn.play { width: 45px; height: 44px; margin: 15px 0 0 3px; display: grid; place-items: center; }

/* taskbar */
.taskbar { position: relative; display: flex; height: 32px; flex: none; color: #fff; background: linear-gradient(90deg, #372b22 0, #372b22 18%, #243d3f 24%, #1f3b40 31%, #333028 36%, #3b2a20 41%, #38273a 52%, #1f2450 56%, #3a2722 60%, #3a2a22 72%, #343430 82%, #2f302b 100%); }
.tb { padding: 0 0 1px; border: 0; border-bottom: 2px solid transparent; background: none; display: grid; place-items: center; }
.start { width: 39px; }
.search { display: flex; align-items: center; width: 230px; background: #f3f3f3; padding: 0 8px; border-top: 1px solid #bbb; }
.search input { flex: 1; min-width: 0; border: 0; background: none; font-size: 11px; padding: 0 0 0 8px; }
.search input::placeholder { color: #333; opacity: 1; }
.apps { display: flex; width: 551px; }
.apps .tb { flex: 1; }
.run { background: linear-gradient(#76b9ed, #76b9ed) bottom / 32px 2px no-repeat border-box; }
.active { background: linear-gradient(#76b9ed, #76b9ed) bottom / 39px 2px no-repeat border-box, #5a544f; }
.badge-wrap { position: relative; }
.badge { position: absolute; right: -3px; bottom: -2px; width: 11px; height: 11px; border-radius: 6px; background: #888; color: #fff; font-size: 8px; line-height: 11px; font-weight: 400; }
.rew { display: block; width: 20px; height: 20px; background: #36187d; color: #fff; font-size: 8px; line-height: 10px; }
.tray { display: flex; align-items: center; gap: 6px; margin-left: auto; padding-right: 16px; }
.tray .pen { margin-left: 6px; }
.tray span { margin: 0 4px; }
.tray time { text-align: center; line-height: 14px; margin: 0 8px 0 0; }
```
FILE: app.js
```js
const NS = 'http://www.w3.org/2000/svg';
const W = 1992, H = 1000, FMIN = 10, FMAX = 30000, RANGE = 190;
const fx = f => W * Math.log10(f / FMIN) / Math.log10(FMAX / FMIN);
const el = (parent, tag, attrs) => {
  const n = document.createElementNS(NS, tag);
  for (const k in attrs) n.setAttribute(k, attrs[k]);
  parent.appendChild(n);
  return n;
};
const tag = (parent, text, cls, style) => {
  const s = document.createElement('span');
  s.textContent = text;
  s.className = cls;
  s.style.cssText = style;
  parent.appendChild(s);
};

const graph = document.getElementById('graph');

// Grid: one line per dB, log-spaced frequency lines
let minor = '', major = '';
for (let db = 1; db < RANGE; db++) {
  const y = (db * H / RANGE).toFixed(1);
  if (db % 10) minor += `M0 ${y}H${W}`; else major += `M0 ${y}H${W}`;
}
let vert = '', decade = '';
for (let d = 10; d <= 1000; d *= 10)
  for (let k = 2; k <= 10; k++) {
    const x = fx(k * d).toFixed(1);
    if (k === 10) decade += `M${x} 0V${H}`; else vert += `M${x} 0V${H}`;
  }
let fine = '';
for (let k = 11; k < 30; k++) fine += `M${fx(k * 1000).toFixed(1)} 0V${H}`;
el(graph, 'path', { d: minor, stroke: '#dadada', fill: 'none' });
el(graph, 'path', { d: major, stroke: '#c0c0c0', fill: 'none' });
el(graph, 'path', { d: fine, stroke: '#d4d4d4', fill: 'none' });
el(graph, 'path', { d: vert, stroke: '#b4b4b4', fill: 'none' });
el(graph, 'path', { d: decade, stroke: '#858585', fill: 'none' });

// Spectrum peaks as [x, y] in plot units
const peaks = [
  [391,988],[404,986],[422,951],[426,981],[432,987],[448,987],[472,976],[480,991],[498,960],[511,945],[529,978],[535,955],[546,967],[553,974],[567,972],[577,958],[588,980],[595,928],[597,938],[604,980],
  [622,933],[620,956],[629,882],[633,950],[637,960],[643,901],[648,957],[655,952],[666,933],[664,947],[671,955],[675,982],[684,929],[690,973],[702,967],[707,952],[718,943],[725,967],[735,971],[739,957],[749,933],[754,970],[768,914],[776,976],[786,978],[793,964],[801,879],[805,962],[816,934],[823,947],[827,970],[837,947],[843,948],[847,939],[857,915],[862,941],[865,963],[874,965],[880,926],[892,961],[896,955],[907,961],[912,939],[922,949],[926,951],[936,959],[940,894],[949,934],[955,964],[961,952],[965,947],[974,853],[977,944],[985,947],[988,935],[996,940],[999,958],[1004,946],[1010,932],[1016,917],[1029,863],[1034,945],[1046,928],[1052,907],[1064,917],[1069,920],[1073,949],[1078,932],[1084,914],[1094,866],[1099,937],[1108,925],[1112,899],[1121,872],[1127,925],[1134,870],[1140,869],[1143,872],[1151,866],[1157,882],[1161,915],[1168,868],[1173,925],[1179,920],[1182,917],
  [1167,868],[1188,875],[1225,869],[1257,894],[1285,845],[1318,852],[1310,895],[1314,881],[1333,903],[1340,904],[1360,903],[1373,860],[1391,891],[1397,885],[1419,866],[1429,887],[1438,879],[1457,878],[1466,890],[1482,890],[1489,877],[1490,843],[1505,866],[1512,896],[1520,903],[1525,900],[1533,868],[1543,879],[1545,815],[1552,882],[1569,869],[1580,873],[1601,880],[1611,857],[1616,892],[1629,837],[1639,889],[1655,884],[1663,839],[1678,868],[1684,877],[1692,807],[1699,881],[1705,863],[1715,873],[1718,852],[1727,880],[1742,818],[1753,867],[1758,866],[1769,885],[1774,853],[1783,824],[1788,873],[1797,864],[1802,855],[1810,870],[1827,861],[1835,852],[1843,875],[1850,830],[1871,866],[1877,838],[1887,869],[1890,848],[1896,867],[1902,858],[1914,830],[1925,805],[1932,882],[1941,859],[1946,822],[1956,854],[1965,869],[1969,865],[1974,826],[1982,798]
];

// Repeatable noise floor
let seed = 7;
const rnd = () => (seed = (seed * 16807) % 2147483647) / 2147483647;
const floorPts = [[380,0],[700,0],[850,2],[1000,10],[1090,22],[1120,36],[1136,66],[1142,108],[1149,108],[1156,65],[1170,36],[1185,24],[1200,14],[1300,18],[1400,42],[1560,64],[1700,78],[1800,90],[1992,96]];
const lerp = x => {
  for (let i = 1; i < floorPts.length; i++) {
    const [a, h] = floorPts[i - 1], [b, k] = floorPts[i];
    if (x <= b) return h + (k - h) * (x - a) / (b - a);
  }
  return 96;
};
let solid = `M380 ${H}`, thin = '';
for (let x = 380; x <= W; x++) {
  const base = lerp(x);
  const h = base * (0.7 + 0.5 * rnd());
  const density = x < 600 ? .02 : x < 800 ? .18 : x < 1000 ? .42 : .68;
  if (rnd() < density) {
    const e = -Math.log(rnd() + .01);
    const s = x < 600 ? 6 + 8 * e : x < 1000 ? 6 + 12 * e : x < 1090 ? base + 8 + 14 * e : x < 1190 ? base + 6 + 18 * e : base + 12 + (x < 1450 ? 23 : 17) * e;
    thin += `M${x}.500 ${H}V${(H - Math.min(s, 160)).toFixed(0)}`;
  }
  solid += `V${(H - h).toFixed(1)}H${x + 1}`;
}
solid += `V${H}Z`;
el(graph, 'path', { d: solid, fill: '#000' });
el(graph, 'path', { d: thin, stroke: '#000', 'stroke-width': 1.2, fill: 'none' });
let lines = '';
for (const [px, y] of peaks) {
  const x = px + 1;
  const w = +Math.max(.3, 4 * (1 - (x - 380) / 380)).toFixed(1);
  lines += `M${x - w} ${H}L${x} ${y}L${x + w} ${H}`;
}
// Wide low-frequency peaks
lines += `M451 ${H}L455 934L459 950L461 ${H}M509 ${H}L511 945L514 960L516 ${H}`;
el(graph, 'path', { d: lines, stroke: '#000', 'stroke-width': 1.3, fill: 'none' });
el(graph, 'path', { d: `M1146 0V${H}`, stroke: '#000', 'stroke-width': 2.4 });

// Out-of-span shading
el(graph, 'rect', { x: 0, y: 0, width: fx(20), height: H, fill: '#fff', opacity: .75 });
el(graph, 'rect', { x: fx(20000), y: 0, width: W - fx(20000), height: H, fill: '#fff', opacity: .75 });

const marks = document.getElementById('marks');
for (const [n, x, y] of [[2,1319,847],[3,1420,855],[4,1491,832],[5,1546,805],[7,1630,846],[8,1664,862],[9,1693,796]])
  tag(marks, n, '', `left:${x / W * 100}%;top:${y / H * 100}%`);

const yl = document.getElementById('ylabels');
for (let db = 0; db <= 70; db += 5)
  tag(yl, db ? -db : '0', db ? (db % 10 ? '' : 'maj') : 'end', `top:${db / RANGE * 100}%`);

const xl = document.getElementById('xlabels');
const major10 = [10,20,30,40,50,60,70,80,90,100,200,300,400,500,600,700,800,900,1000,2000,3000,4000,5000,6000,7000,8000,9000,10000,20000];
const name = f => f < 1000 ? f : f / 1000 + 'k';
for (const f of major10) tag(xl, name(f), 'maj', `left:${fx(f) / W * 100}%`);
for (const f of [11000,12000,14000,16000,18000,23000,26000]) tag(xl, name(f), '', `left:${fx(f) / W * 100}%`);
tag(xl, '30.0k', 'end', 'left:100%');

// Level meters
document.getElementById('meters').innerHTML = [['Out', 'live', '0.00'], ['In', '', ''], ['Ref In', '', '']].map(([t, c, v]) =>
  `<div class="meter ${c}"><h3>${t}</h3><div class="scale"><div class="nums">${[0,10,20,30,40,50,60,70,80,90,100].map(n => `<span>${n ? -n : 0}</span>`).join('')}</div><div class="ticks"></div><div class="bar"></div></div><span class="u">dBFS</span><output>${v}</output></div>`).join('');

// Generator waveform
const wave = document.getElementById('wave');
let d = '';
for (let x = 0; x <= 412; x += 2) d += `${x ? 'L' : 'M'}${x} ${(46 - 38 * Math.cos((x - 20) / 83 * 2 * Math.PI)).toFixed(1)}`;
el(wave, 'path', { d: 'M0 8H412M0 84H412', stroke: '#363636' });
el(wave, 'path', { d: 'M0 46H412', stroke: '#999' });
el(wave, 'path', { d, stroke: '#444', 'stroke-width': 1.5, fill: 'none' });
```
